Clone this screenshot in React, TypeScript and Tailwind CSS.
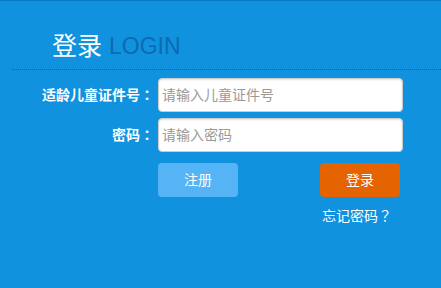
import React from "react";

const tc = { fontFamily: '"Noto Sans CJK TC", sans-serif' };

export default function App() {
  const font = { fontFamily: '"Liberation Sans", "Noto Sans CJK SC", sans-serif' };
  return (
    <div
      className="w-[441px] h-[288px] bg-[#1092df] border-t border-[#0b7cc4] overflow-hidden"
      style={font}
    >
      <div className="ml-[12px] border-b border-dotted border-[#0d5f9e] pt-[31px] pb-[10px] pl-[40px] flex items-center h-[69px]">
        <span className="text-[25px] leading-[28px] text-white">登录</span>
        <span className="text-[23px] leading-[28px] text-[#0c6bb0] ml-[7px]">LOGIN</span>
      </div>
      <div className="mt-[8px] flex flex-col gap-[6px]">
        <div className="flex items-center">
          <label className="w-[154px] text-right text-[14px] font-bold text-white">
            适龄儿童证件号<span style={tc}>：</span>
          </label>
          <input
            className="ml-[4px] w-[245px] h-[34px] rounded-[4px] border border-[#cccccc] bg-white pl-[3px] text-[14px] text-[#555] placeholder:text-[#999] shadow-[inset_0_1px_2px_rgba(0,0,0,0.12)] outline-none"
            placeholder="请输入儿童证件号"
          />
        </div>
        <div className="flex items-center">
          <label className="w-[154px] text-right text-[14px] font-bold text-white">
            密码<span style={tc}>：</span>
          </label>
          <input
            type="password"
            className="ml-[4px] w-[245px] h-[34px] rounded-[4px] border border-[#cccccc] bg-white pl-[3px] text-[14px] text-[#555] placeholder:text-[#999] shadow-[inset_0_1px_2px_rgba(0,0,0,0.12)] outline-none"
            placeholder="请输入密码"
          />
        </div>
      </div>
      <div className="mt-[11px] ml-[158px] w-[242px] flex justify-between">
        <button className="w-[80px] h-[34px] rounded-[4px] bg-[#54b4f5] text-white text-[14px]">注册</button>
        <button className="w-[80px] h-[34px] rounded-[4px] bg-[#e56300] text-white text-[14px]">登录</button>
      </div>
      <div className="mt-[9px] ml-[322px] text-[14px] text-white leading-[18px]">
        忘记密码<span style={tc}>？</span>
      </div>
    </div>
  );
}
